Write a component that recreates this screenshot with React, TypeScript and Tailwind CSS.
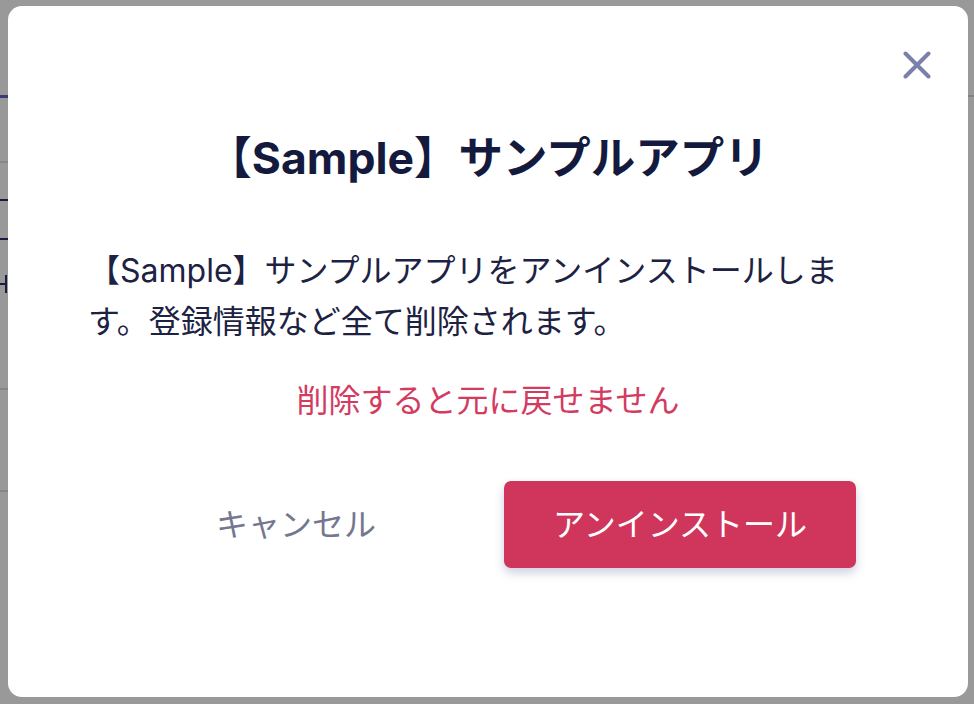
import React from "react";

const jpFont = {
  fontFamily: '"Inter", "Noto Sans CJK JP", sans-serif',
};

function BackgroundPage() {
  return (
    <div className="min-h-screen w-full bg-white">
      <div className="h-[95px]" />
      <div className="flex h-[3px] items-start">
        <div className="h-[3px] w-[180px] bg-[#5b62c6]" />
        <div className="h-[2px] flex-1 bg-[#d8d8e6]" />
      </div>
      <div className="h-[63px]" />
      <div className="h-[2px] w-[300px] bg-[#e2e2ee]" />
      <div className="h-[36px]" />
      <div className="h-[41px] w-[60px] border-y-2 border-[#2b3068]" />
      <div className="h-[35px]" />
      <div className="flex h-[18px] w-[8px] items-center">
        <div className="h-[2px] w-[5px] bg-[#2b3068]" />
        <div className="h-[18px] w-[2px] bg-[#2b3068]" />
      </div>
      <div className="h-[95px]" />
      <div className="h-[2px] w-[300px] bg-[#dcdce8]" />
      <div className="h-[100px]" />
      <div className="h-[2px] w-[300px] bg-[#dcdce8]" />
    </div>
  );
}

function CloseIcon() {
  return (
    <svg width="28" height="28" viewBox="0 0 28 28" fill="none">
      <path
        d="M2.5 2.5 25.5 25.5M25.5 2.5 2.5 25.5"
        stroke="#7b80aa"
        strokeWidth="4"
        strokeLinecap="round"
      />
    </svg>
  );
}

function UninstallDialog() {
  return (
    <div
      className="relative flex h-full w-full flex-col items-center rounded-[14px] bg-white pt-[121px]"
      style={jpFont}
    >
      <button className="absolute right-[31px] top-[39px] flex h-[40px] w-[40px] items-center justify-center">
        <CloseIcon />
      </button>

      <h1 className="text-[44.5px] font-bold leading-[62px] text-[#141a3d]">
        【Sample】サンプルアプリ
      </h1>

      <p className="mt-[56px] w-[800px] text-[32px] leading-[51px] text-[#1d2242]">
        【Sample】サンプルアプリをアンインストールします。登録情報など全て削除されます。
      </p>

      <p className="mt-[28px] text-[32px] leading-[51px] text-[#d43b60]">
        削除すると元に戻せません
      </p>

      <div className="mt-[55px] flex gap-[32px]">
        <button className="flex h-[87px] w-[352px] items-center justify-center text-[32px] text-[#74778f]">
          キャンセル
        </button>
        <button className="flex h-[87px] w-[352px] items-center justify-center rounded-[7px] bg-[#d0355b] text-[32px] text-white shadow-[0_5px_10px_rgba(60,70,140,0.25)]">
          アンインストール
        </button>
      </div>
    </div>
  );
}

export default function App() {
  return (
    <div className="relative min-h-screen w-full">
      <BackgroundPage />
      <div className="fixed inset-0 bg-black/40 pb-[7px] pl-[8px] pr-[6px] pt-[6px]">
        <UninstallDialog />
      </div>
    </div>
  );
}
